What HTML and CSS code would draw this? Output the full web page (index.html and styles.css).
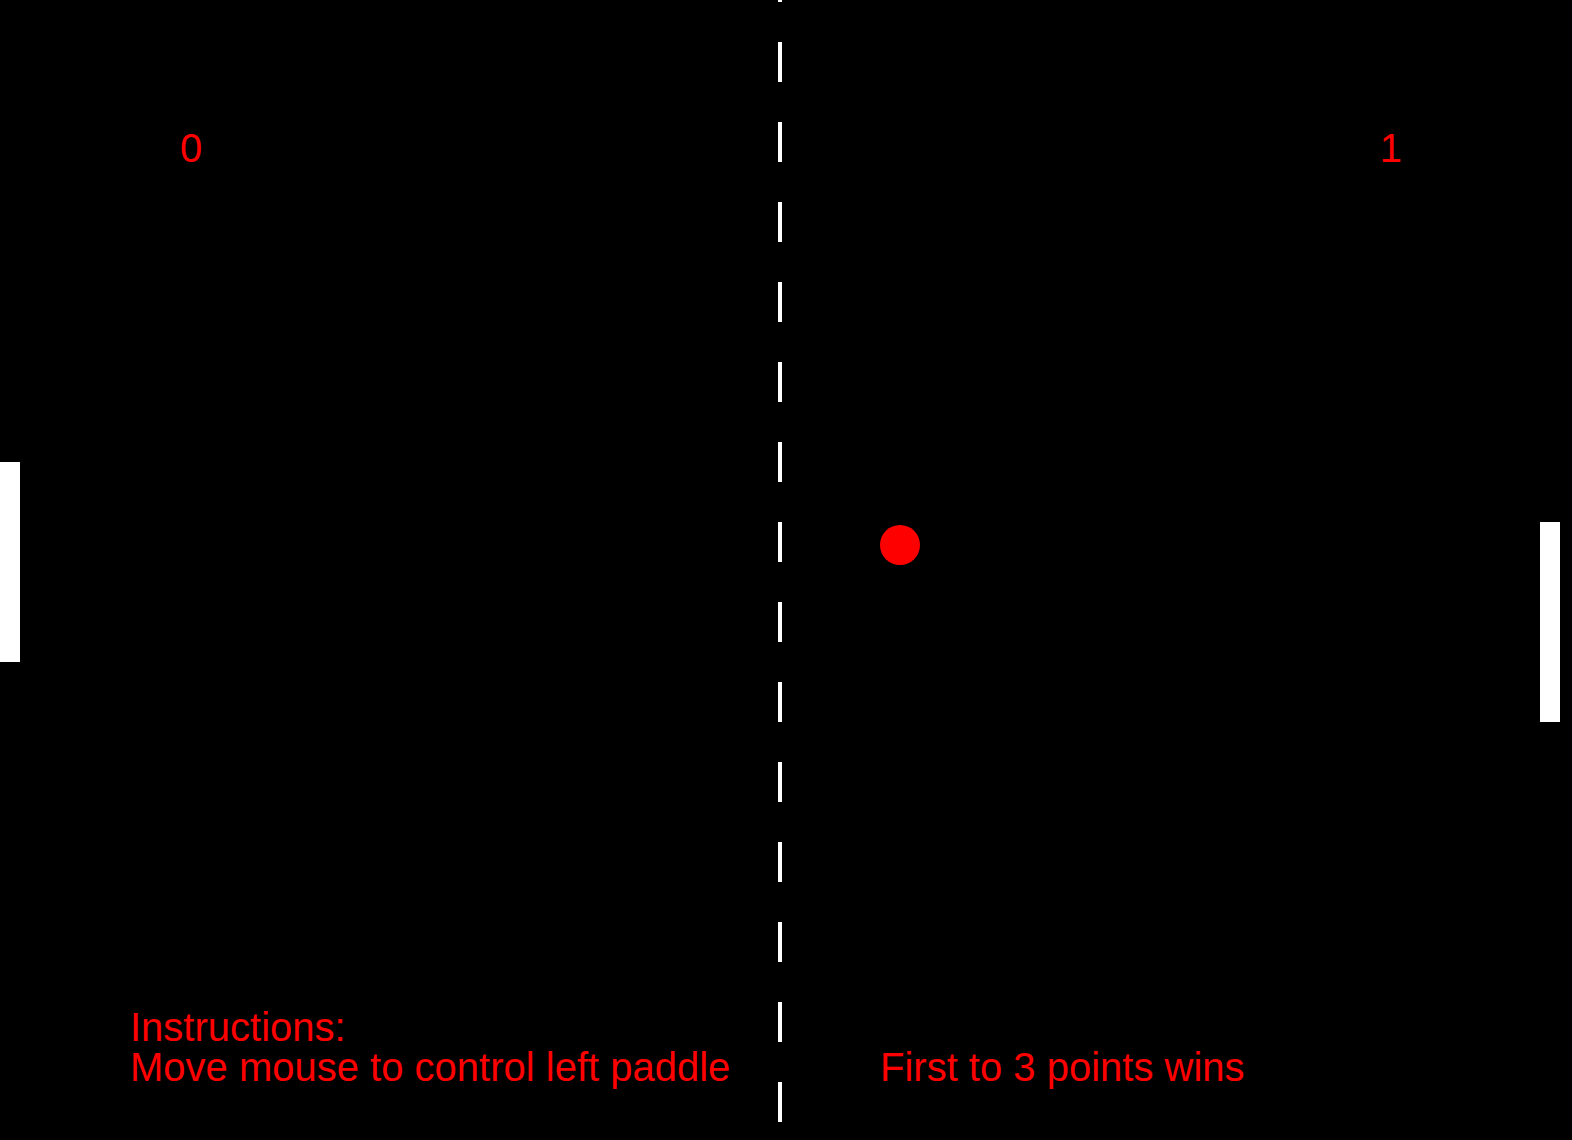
FILE: index.html
```html
<!DOCTYPE html>
<html lang="en">
<head>
    <meta charset="UTF-8">
    <meta name="viewport" content="width=device-width, initial-scale=1.0">
    <title>Pong</title>
    <link rel="stylesheet" href="styles.css">
</head>
<body>
    <div class="board">
        <div class="net"></div>
        <div class="paddle paddle-left"></div>
        <div class="paddle paddle-right"></div>
        <div class="ball"></div>

        <div class="hud">
            <div class="scores">
                <span class="score">0</span>
                <span class="score">1</span>
            </div>
            <div class="info">
                <div class="instructions">Instructions:<br>Move mouse to control left paddle</div>
                <div class="goal">First to 3 points wins</div>
            </div>
        </div>
    </div>
</body>
</html>
```

FILE: styles.css
```css
body, html {
    height: 100%;
    margin: 0;
    background-color: #000;
    overflow: hidden;
    font-family: "Liberation Sans", Arial, sans-serif;
}
.board {
    position: relative;
    width: 1560px;
    height: 1140px;
    background-color: #000;
}
.net {
    position: absolute;
    top: 0;
    bottom: 0;
    left: 778px;
    width: 4px;
    background-image: linear-gradient(to bottom, #fff 0, #fff 40px, transparent 40px, transparent 80px);
    background-size: 4px 80px;
    background-position: 0 42px;
    background-repeat: repeat-y;
}
.paddle {
    position: absolute;
    width: 20px;
    height: 200px;
    background-color: #fff;
}
.paddle-left {
    left: 0;
    top: 462px;
}
.paddle-right {
    left: 1540px;
    top: 522px;
}
.ball {
    position: absolute;
    left: 880px;
    top: 525px;
    width: 40px;
    height: 40px;
    border-radius: 50%;
    background-color: #ff0000;
}
.hud {
    position: absolute;
    inset: 0;
    display: flex;
    flex-direction: column;
    justify-content: space-between;
    color: #ff0000;
    font-size: 40px;
    line-height: 40px;
}
.scores {
    display: flex;
    justify-content: space-between;
    padding: 128px 158px 0 180px;
}
.info {
    display: grid;
    grid-template-columns: 750px auto;
    align-items: end;
    padding: 0 0 53px 130px;
}
```
